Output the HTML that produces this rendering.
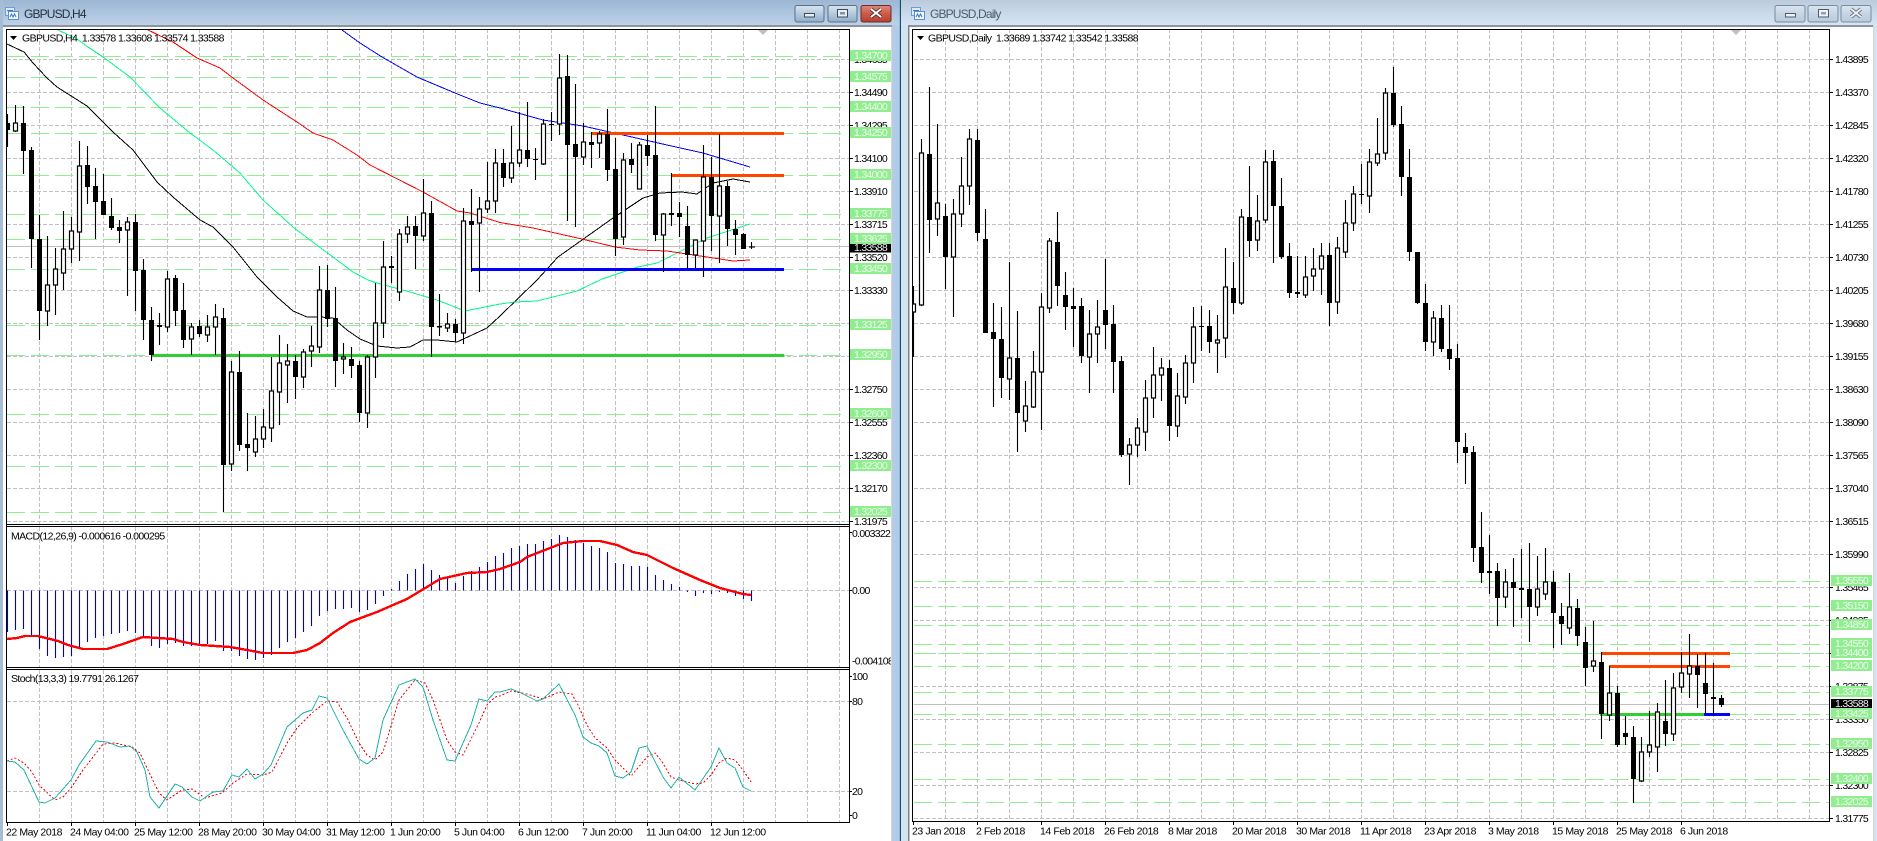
<!DOCTYPE html>
<html><head><meta charset="utf-8"><title>GBPUSD charts</title>
<style>
html,body{margin:0;padding:0;background:#fff;overflow:hidden}
svg{display:block}
text{font-family:"Liberation Sans",sans-serif;font-size:10.5px;letter-spacing:-.7px;fill:#000;white-space:pre}
.l text{fill:#eefdee}
text.t{font-size:12px;letter-spacing:-.85px;fill:#25303c}
text.x{letter-spacing:-.42px}
text.g{letter-spacing:-.6px}
path{fill:none}
.c{shape-rendering:crispEdges}
</style></head><body>
<svg xmlns="http://www.w3.org/2000/svg" width="1877" height="841" viewBox="0 0 1877 841">
<defs>
<linearGradient id="a" x1="0" y1="0" x2="0" y2="1"><stop offset="0" stop-color="#9cb6d3"/><stop offset="1" stop-color="#bdd2e8"/></linearGradient>
<linearGradient id="b" x1="0" y1="0" x2="0" y2="1"><stop offset="0" stop-color="#bccbdb"/><stop offset="1" stop-color="#d6e5f4"/></linearGradient>
<linearGradient id="c" x1="0" y1="0" x2="0" y2="1"><stop offset="0" stop-color="#d9e5f1"/><stop offset=".5" stop-color="#b4c9de"/><stop offset="1" stop-color="#8fafcd"/></linearGradient>
<linearGradient id="d" x1="0" y1="0" x2="0" y2="1"><stop offset="0" stop-color="#e08a7c"/><stop offset=".5" stop-color="#cc5a48"/><stop offset="1" stop-color="#b8402f"/></linearGradient>
<linearGradient id="e" x1="0" y1="0" x2="0" y2="1"><stop offset="0" stop-color="#dbe5ef"/><stop offset=".5" stop-color="#c6d5e4"/><stop offset="1" stop-color="#b9cbdd"/></linearGradient>
</defs>
<rect width="1877" height="841" fill="#fff"/>

<!-- LEFT CHART grid -->
<path stroke="#c0c0c0" stroke-dasharray="4 2" d="M39.5 29V524M71.5 29V524M103.5 29V524M135.5 29V524M167.5 29V524M199.5 29V524M231.5 29V524M263.5 29V524M295.5 29V524M327.5 29V524M359.5 29V524M391.5 29V524M423.5 29V524M455.5 29V524M487.5 29V524M519.5 29V524M551.5 29V524M583.5 29V524M615.5 29V524M647.5 29V524M679.5 29V524M711.5 29V524M743.5 29V524M775.5 29V524M807.5 29V524M839.5 29V524
M39.5 527V667M71.5 527V667M103.5 527V667M135.5 527V667M167.5 527V667M199.5 527V667M231.5 527V667M263.5 527V667M295.5 527V667M327.5 527V667M359.5 527V667M391.5 527V667M423.5 527V667M455.5 527V667M487.5 527V667M519.5 527V667M551.5 527V667M583.5 527V667M615.5 527V667M647.5 527V667M679.5 527V667M711.5 527V667M743.5 527V667M775.5 527V667M807.5 527V667M839.5 527V667
M39.5 670V822M71.5 670V822M103.5 670V822M135.5 670V822M167.5 670V822M199.5 670V822M231.5 670V822M263.5 670V822M295.5 670V822M327.5 670V822M359.5 670V822M391.5 670V822M423.5 670V822M455.5 670V822M487.5 670V822M519.5 670V822M551.5 670V822M583.5 670V822M615.5 670V822M647.5 670V822M679.5 670V822M711.5 670V822M743.5 670V822M775.5 670V822M807.5 670V822M839.5 670V822
M7 59.5H849M7 92.5H849M7 125.5H849M7 158.5H849M7 191.5H849M7 224.5H849M7 257.5H849M7 290.5H849M7 323.5H849M7 356.5H849M7 389.5H849M7 422.5H849M7 455.5H849M7 488.5H849M7 521.5H849
M7 590.5H849M7 701.5H849M7 791.5H849"/>
<path stroke="#c0c0c0" d="M7 246.5H849"/>
<path stroke="#90ee90" stroke-dasharray="18 6" d="M7 56.5H841M7 77.5H841M7 107.5H841M7 133.5H841M7 175.5H841M7 214.5H841M7 239.5H841M7 269.5H841M7 325.5H841M7 355.5H841M7 414.5H841M7 466.5H841M7 512.5H841"/>

<!-- MAs -->
<path class="c" stroke="#000" d="M7 44L24 52L33 63L47 78L57 87L87 106L113 132L133 150L157 182L173 197L200 220L213 227L227 241L233 247L257 277L260 280L277 297L293 311L307 317L320 317L333 318L347 330L360 339L377 346L397 348L410 347L423 340L437 340L457 342L487 328L500 316L537 280L558 257L582 240L613 218L643 198L660 193L682 192L697 194L713 183L733 179L750 182"/>
<path class="c" stroke="#00fa8a" d="M58 30L77 39L88 47L103 57L130 77L160 108L190 133L213 150L240 173L263 200L293 227L310 240L333 257L353 272L368 280L377 283L410 292L437 300L465 311L500 304L515 302L537 301L577 291L600 280L602 279L638 267L657 263L687 248L707 238L750 224"/>
<path class="c" stroke="#f00" d="M148 30L173 42L197 58L220 68L233 78L263 100L297 122L313 133L333 140L357 155L370 165L423 192L457 211L470 213L500 222.5L533 228L582 239L615 247L640 250L667 251L707 257L733 261L750 260"/>
<path class="c" stroke="#00f" d="M342 30L360 43L382 57L417 77L455 93L480 103L500 108L543 120L583 126L623 135L667 145L703 153L750 167"/>

<!-- thick lines -->
<path stroke="#ff4500" stroke-width="3" d="M591 133.5H784M671 175.5H784"/>
<path stroke="#00f" stroke-width="3" d="M471 269.5H784"/>
<path stroke="#32cd32" stroke-width="3" d="M152 355.5H784"/>

<!-- left candles wicks -->
<path stroke="#000" stroke-width="1.1" d="M7.5 114V147M15.5 105V132M23.5 106V174M31.5 147V268M39.5 215V340M47.5 236V326M55.5 248V315M63.5 211V290M71.5 217V263M79.5 141V261M87.5 146V204M95.5 168V239M103.5 174V215M111.5 198V230M119.5 220V243M127.5 217V296M135.5 214V311M143.5 259V340M151.5 307V361M159.5 313V345M167.5 271V332M175.5 275V326M183.5 283V348M191.5 323V355M199.5 320V337M207.5 315V342M215.5 304V355M223.5 308V512M231.5 361V471M239.5 351V451M247.5 413V471M255.5 416V457M263.5 409V448M271.5 357V442M279.5 335V425M287.5 344V403M295.5 355V399M303.5 349V388M311.5 326V367M319.5 266V353M327.5 265V327M335.5 287V387M343.5 343V374M351.5 347V378M359.5 361V422M367.5 355V428M375.5 283V378M383.5 241V338M391.5 256V283M399.5 229V301M407.5 216V243M415.5 216V269M423.5 179V241M431.5 201V357M439.5 294V336M447.5 313V332M455.5 319V342M463.5 208V344M471.5 189V272M479.5 197V292M487.5 162V213M495.5 149V213M503.5 149V187M511.5 126V183M519.5 112V167M527.5 102V167M535.5 148V180M543.5 119V165M551.5 112V141M559.5 54V135M567.5 55V221M575.5 84V227M583.5 123V165M591.5 132V168M599.5 131V158M607.5 109V181M615.5 138V256M623.5 153V245M631.5 143V173M639.5 142V189M647.5 135V166M655.5 106V241M663.5 213V272M671.5 173V226M679.5 202V237M687.5 206V269M695.5 240V268M703.5 145V277M711.5 157V251M719.5 134V263M727.5 181V246M735.5 220V255M743.5 233V249M751.5 242V249"/>
<path stroke="#000" stroke-width="1.1" d="M749 247H755"/>
<!-- black bodies -->
<path stroke="#000" stroke-width="5" d="M7.5 123V130M23.5 123V151M31.5 150V239M39.5 239V311M87.5 165V187M95.5 186V202M103.5 201V215M111.5 216V228M119.5 227V231M135.5 222V271M143.5 270V320M151.5 320V355M159.5 325V327M175.5 278V311M183.5 310V340M199.5 326V334M223.5 318V465M239.5 372V445M247.5 444V448M295.5 361V377M327.5 290V319M335.5 318V361M351.5 359V366M359.5 365V413M391.5 266V268M415.5 226V236M431.5 213V327M439.5 326V327.5M455.5 324V333M471.5 221V225M503.5 163V178M527.5 150V159M535.5 159V160M551.5 124V125M567.5 76V145M575.5 144V157M591.5 142V145M607.5 134V170M615.5 169V239M631.5 159V165M647.5 145V156M655.5 155V235M671.5 213V215M679.5 213V217M687.5 226V255M711.5 177V216M727.5 186V229M735.5 229V235M743.5 234V249"/>
<!-- white bodies -->
<path stroke="#000" stroke-width="1.2" style="fill:#fff" d="M13.5 123h4V131h-4zM45.5 285h4V311h-4zM53.5 269h4V285h-4zM61.5 249h4V273h-4zM69.5 231h4V249h-4zM77.5 166h4V232h-4zM125.5 222h4V230h-4zM165.5 279h4V327h-4zM189.5 327h4V339h-4zM205.5 327h4V335h-4zM213.5 317h4V327h-4zM229.5 372h4V464h-4zM253.5 439h4V452h-4zM261.5 427h4V439h-4zM269.5 391h4V428h-4zM277.5 363h4V392h-4zM285.5 361h4V365h-4zM301.5 352h4V377h-4zM309.5 346h4V351h-4zM317.5 290h4V347h-4zM341.5 357h4V359h-4zM365.5 357h4V413h-4zM373.5 323h4V357h-4zM381.5 267h4V323h-4zM397.5 234h4V292h-4zM405.5 227h4V234h-4zM421.5 213h4V236h-4zM445.5 324h4V328h-4zM461.5 221h4V333h-4zM477.5 209h4V223h-4zM485.5 201h4V209h-4zM493.5 163h4V201h-4zM509.5 163h4V178h-4zM517.5 150h4V163h-4zM541.5 124h4V164h-4zM557.5 78h4V124h-4zM581.5 142h4V157h-4zM597.5 134h4V143h-4zM621.5 160h4V237h-4zM637.5 145h4V189h-4zM661.5 214h4V235h-4zM693.5 240h4V255h-4zM701.5 177h4V241h-4zM717.5 186h4V216h-4z"/>

<!-- MACD histogram -->
<path stroke="#0000cd" stroke-width="1.1" d="M7.5 590.5V632M15.5 590.5V630M23.5 590.5V629M31.5 590.5V637M39.5 590.5V649M47.5 590.5V656M55.5 590.5V658M63.5 590.5V657M71.5 590.5V656M79.5 590.5V648M87.5 590.5V642M95.5 590.5V638M103.5 590.5V636M111.5 590.5V634M119.5 590.5V633M127.5 590.5V631M135.5 590.5V633M143.5 590.5V637M151.5 590.5V646M159.5 590.5V648M167.5 590.5V644M175.5 590.5V643M183.5 590.5V646M191.5 590.5V646M199.5 590.5V644M207.5 590.5V644M215.5 590.5V641M223.5 590.5V651M231.5 590.5V651M239.5 590.5V656M247.5 590.5V659M255.5 590.5V660M263.5 590.5V658M271.5 590.5V655M279.5 590.5V648M287.5 590.5V642M295.5 590.5V638M303.5 590.5V632M311.5 590.5V626M319.5 590.5V616M327.5 590.5V611M335.5 590.5V609M343.5 590.5V609M351.5 590.5V608M359.5 590.5V612M367.5 590.5V610M375.5 590.5V604M383.5 590.5V596M391.5 590.5V589M399.5 590.5V581M407.5 590.5V574M415.5 590.5V569M423.5 590.5V564M431.5 590.5V570M439.5 590.5V575M447.5 590.5V578M455.5 590.5V583M463.5 590.5V576M471.5 590.5V571M479.5 590.5V567M487.5 590.5V562M495.5 590.5V556M503.5 590.5V553M511.5 590.5V548M519.5 590.5V546M527.5 590.5V544M535.5 590.5V544M543.5 590.5V541M551.5 590.5V539M559.5 590.5V535M567.5 590.5V537M575.5 590.5V540M583.5 590.5V543M591.5 590.5V546M599.5 590.5V548M607.5 590.5V552M615.5 590.5V563M623.5 590.5V564M631.5 590.5V566M639.5 590.5V566M647.5 590.5V567M655.5 590.5V575M663.5 590.5V580M671.5 590.5V584M679.5 590.5V587M687.5 590.5V592M695.5 590.5V596M703.5 590.5V593M711.5 590.5V594M719.5 590.5V592M727.5 590.5V593M735.5 590.5V596M743.5 590.5V599M751.5 590.5V601"/>
<path class="c" stroke="#f00" stroke-width="2.4" d="M7 639L17 638L25 636L38 636L50 639L58 641L68 645L83 649L107 649L123 644L143 637L173 639L183 642L200 645L230 647L247 650L263 653L293 653L307 650L320 643L333 633L350 622L377 612L393 605L407 599L427 587L440 579L467 573L487 572L500 569L520 562L527 557L550 548L563 543L583 541L600 541L617 545L633 552L647 555L673 568L700 580L720 588L743 594L751 595"/>

<!-- Stoch -->
<path class="c" stroke="#f00" stroke-dasharray="2 2" d="M7 761L15 758L24 763L32 772L39 785L55 800L63 797L71 788L83 770L103 744L115 743L132 747L140 753L148 770L159 793L167 800L182 790L192 789L205 798L222 793L233 783L247 774L263 775L272 772L287 743L297 728L312 713L327 701L337 702L347 718L359 743L367 755L375 760L383 752L399 700L415 680L425 683L433 700L447 740L455 752L463 755L479 723L487 705L495 697L500 696L511 691L527 694L543 699L559 692L572 694L578 705L587 725L595 738L607 748L615 760L631 776L647 757L655 753L663 763L671 777L679 780L695 784L703 783L711 775L719 763L727 758L735 760L743 770L751 782"/>
<path class="c" stroke="#20b2aa" d="M7 761L15 762L24 770L39 802L45 803L55 798L71 780L79 765L96 741L107 742L120 747L130 746L137 752L145 770L150 797L159 808L175 784L182 787L192 797L200 801L213 792L223 791L232 775L239 777L247 769L255 779L263 774L271 765L287 727L303 713L312 710L319 696L327 698L343 730L359 759L367 764L375 758L383 720L399 685L415 679L423 687L433 720L447 760L455 761L471 725L479 699L487 701L495 692L500 692L511 689L519 692L537 701L543 699L559 684L575 715L583 737L591 743L599 746L607 753L615 776L623 778L631 772L639 748L647 746L663 777L671 788L679 777L695 790L711 767L719 748L727 763L735 768L743 787L751 791"/>

<path fill="#c0c0c0" style="fill:#c0c0c0" d="M758 30H768L763 35Z"/>

<!-- left chart frame -->
<rect x="0" y="27" width="6" height="814" fill="#fff"/>
<path stroke="#000" d="M6.5 29V822.5M6 29.5H849M849.5 29V823M6 524.5H849M6 526.5H849M6 667.5H849M6 669.5H849M6 822.5H850"/>
<path stroke="#000" d="M849 59.5h4M849 92.5h4M849 125.5h4M849 158.5h4M849 191.5h4M849 224.5h4M849 257.5h4M849 290.5h4M849 323.5h4M849 356.5h4M849 389.5h4M849 422.5h4M849 455.5h4M849 488.5h4M849 521.5h4M849 590.5h3M849 532.5h3M849 676.5h3M849 701.5h3M849 791.5h3M849 815.5h3M7.5 822v4M71.5 822v4M135.5 822v4M199.5 822v4M263.5 822v4M327.5 822v4M391.5 822v4M455.5 822v4M519.5 822v4M583.5 822v4M647.5 822v4M711.5 822v4"/>

<!-- left price text -->
<g>
<text x="854" y="63">1.34685</text><text x="854" y="96">1.34490</text><text x="854" y="129">1.34295</text><text x="854" y="162">1.34100</text><text x="854" y="195">1.33910</text><text x="854" y="228">1.33715</text><text x="854" y="261">1.33520</text><text x="854" y="294">1.33330</text><text x="854" y="393">1.32750</text><text x="854" y="426">1.32555</text><text x="854" y="459">1.32360</text><text x="854" y="492">1.32170</text><text x="854" y="525">1.31975</text>
<text x="852" y="537">0.003322</text><text x="852" y="594">0.00</text><text x="852" y="664.5">-0.004108</text>
<text x="852" y="680">100</text><text x="852" y="705">80</text><text x="852" y="795">20</text><text x="852" y="819">0</text>
</g>
<g fill="#90ee90">
<rect x="850" y="50" width="41" height="11"/><rect x="850" y="71" width="41" height="11"/><rect x="850" y="101" width="41" height="11"/><rect x="850" y="127" width="41" height="11"/><rect x="850" y="169" width="41" height="11"/><rect x="850" y="208" width="41" height="11"/><rect x="850" y="233" width="41" height="11"/><rect x="850" y="263" width="41" height="11"/><rect x="850" y="319" width="41" height="11"/><rect x="850" y="349" width="41" height="11"/><rect x="850" y="408" width="41" height="11"/><rect x="850" y="460" width="41" height="11"/><rect x="850" y="506" width="41" height="11"/>
</g>
<g class="l">
<text x="854" y="59">1.34700</text><text x="854" y="80">1.34575</text><text x="854" y="110">1.34400</text><text x="854" y="136">1.34250</text><text x="854" y="178">1.34000</text><text x="854" y="217">1.33775</text><text x="854" y="242">1.33625</text><text x="854" y="272">1.33450</text><text x="854" y="328">1.33125</text><text x="854" y="358">1.32950</text><text x="854" y="417">1.32600</text><text x="854" y="469">1.32300</text><text x="854" y="515">1.32025</text>
</g>
<rect x="850" y="244" width="41" height="8.5" fill="#000"/>
<text x="854" y="251" style="fill:#eee">1.33588</text>

<!-- left legends -->
<path style="fill:#000" d="M10 36H17L13.5 40Z"/>
<text class="g" x="22" y="41.5">GBPUSD,H4  1.33578 1.33608 1.33574 1.33588</text>
<text class="g" x="11" y="539.5">MACD(12,26,9) -0.000616 -0.000295</text>
<text class="g" x="11" y="682">Stoch(13,3,3) 19.7791 26.1267</text>
<text class="x" x="6" y="835.5">22 May 2018</text><text class="x" x="70" y="835.5">24 May 04:00</text><text class="x" x="134" y="835.5">25 May 12:00</text><text class="x" x="198" y="835.5">28 May 20:00</text><text class="x" x="262" y="835.5">30 May 04:00</text><text class="x" x="326" y="835.5">31 May 12:00</text><text class="x" x="390" y="835.5">1 Jun 20:00</text><text class="x" x="454" y="835.5">5 Jun 04:00</text><text class="x" x="518" y="835.5">6 Jun 12:00</text><text class="x" x="582" y="835.5">7 Jun 20:00</text><text class="x" x="646" y="835.5">11 Jun 04:00</text><text class="x" x="710" y="835.5">12 Jun 12:00</text>

<!-- RIGHT CHART grid -->
<rect x="909" y="27" width="964" height="814" fill="#fff"/>
<path stroke="#c0c0c0" stroke-dasharray="4 2" d="M945.5 29V821M977.5 29V821M1009.5 29V821M1041.5 29V821M1073.5 29V821M1105.5 29V821M1137.5 29V821M1169.5 29V821M1201.5 29V821M1233.5 29V821M1265.5 29V821M1297.5 29V821M1329.5 29V821M1361.5 29V821M1393.5 29V821M1425.5 29V821M1457.5 29V821M1489.5 29V821M1521.5 29V821M1553.5 29V821M1585.5 29V821M1617.5 29V821M1649.5 29V821M1681.5 29V821M1713.5 29V821M1745.5 29V821M1777.5 29V821M1809.5 29V821
M914 59.5H1829M914 92.5H1829M914 125.5H1829M914 158.5H1829M914 191.5H1829M914 224.5H1829M914 257.5H1829M914 290.5H1829M914 323.5H1829M914 356.5H1829M914 389.5H1829M914 422.5H1829M914 455.5H1829M914 488.5H1829M914 521.5H1829M914 554.5H1829M914 587.5H1829M914 620.5H1829M914 653.5H1829M914 686.5H1829M914 719.5H1829M914 752.5H1829M914 785.5H1829M914 818.5H1829"/>
<path stroke="#c0c0c0" d="M914 704.5H1829"/>
<path stroke="#90ee90" stroke-dasharray="18 6" d="M914 581.5H1829M914 606.5H1829M914 625.5H1829M914 644.5H1829M914 653.5H1829M914 666.5H1829M914 692.5H1829M914 714.5H1829M914 744.5H1829M914 779.5H1829M914 802.5H1829"/>
<path stroke="#ff4500" stroke-width="3" d="M1601 653.5H1730M1609 666.5H1730"/>
<path stroke="#32cd32" stroke-width="3" d="M1600 714.5H1705"/>
<path stroke="#00f" stroke-width="3" d="M1704 714.5H1730"/>

<!-- right wicks -->
<path stroke="#000" stroke-width="1.1" d="M913.5 286V357M921.5 139V306M929.5 87V253M937.5 124V236M945.5 204V289M953.5 199V317M961.5 157V227M969.5 129V205M977.5 129V241M985.5 209V333M993.5 303V407M1001.5 307V398M1009.5 262V400M1017.5 311V452M1025.5 381V432M1033.5 351V408M1041.5 293V430M1049.5 238V313M1057.5 212V306M1065.5 272V330M1073.5 288V347M1081.5 298V363M1089.5 310V393M1097.5 300V363M1105.5 259V349M1113.5 305V393M1121.5 356V457M1129.5 438V485M1137.5 418V457M1145.5 380V451M1153.5 347V418M1161.5 358V401M1169.5 360V441M1177.5 373V437M1185.5 355V404M1193.5 307V383M1201.5 306V351M1209.5 310V353M1217.5 315V373M1225.5 248V358M1233.5 262V314M1241.5 209V305M1249.5 166V257M1257.5 195V251M1265.5 150V223M1273.5 150V263M1281.5 178V259M1289.5 243V298M1297.5 256V298M1305.5 256V298M1313.5 248V291M1321.5 243V295M1329.5 243V326M1337.5 237V314M1345.5 200V258M1353.5 186V231M1361.5 164V204M1369.5 149V213M1377.5 118V166M1385.5 88V160M1393.5 67V127M1401.5 106V196M1409.5 149V261M1417.5 252V304M1425.5 284V351M1433.5 311V356M1441.5 305V352M1449.5 305V370M1457.5 344V463M1465.5 433V484M1473.5 446V562M1481.5 512V583M1489.5 535V594M1497.5 563V626M1505.5 569V608M1513.5 558V627M1521.5 549V618M1529.5 543V642M1537.5 556V616M1545.5 548V600M1553.5 571V648M1561.5 603V645M1569.5 573V634M1577.5 599V646M1585.5 627V686M1593.5 621V672M1601.5 652V739M1609.5 666V721M1617.5 686V747M1625.5 716V745M1633.5 726V803M1641.5 737V782M1649.5 711V757M1657.5 703V772M1665.5 680V746M1673.5 673V741M1681.5 652V693M1689.5 634V698M1697.5 654V708M1705.5 653V714M1713.5 663V715M1721.5 695V707"/>
<!-- right black bodies -->
<path stroke="#000" stroke-width="5" d="M929.5 154V220M945.5 216V257M977.5 140V233M985.5 239V333M993.5 332V339M1001.5 339V378M1017.5 358V413M1057.5 242V286M1065.5 295V307M1073.5 306V309M1081.5 306V356M1105.5 310V325M1113.5 324V362M1121.5 361V455M1169.5 368V426M1201.5 326V327M1209.5 326V342M1233.5 288V303M1249.5 217V241M1273.5 161V206M1281.5 206V257M1289.5 256V293M1297.5 292V294M1329.5 255V303M1361.5 194V195M1393.5 93V125M1401.5 124V177M1409.5 177V252M1417.5 252V303M1425.5 303V342M1441.5 318V349M1449.5 349V359M1457.5 358V442M1465.5 447V453M1473.5 452V548M1481.5 547V573M1489.5 571V573M1497.5 571V598M1513.5 582V588M1521.5 588V590M1529.5 589V607M1553.5 582V613M1561.5 616V624M1577.5 608V636M1585.5 642V668M1601.5 662V714M1617.5 693V745M1625.5 733V737M1633.5 737V779M1665.5 721V734M1697.5 666V675M1705.5 683V694M1713.5 697V699M1721.5 698V705"/>
<!-- right white bodies -->
<path stroke="#000" stroke-width="1.2" style="fill:#fff" d="M911.5 304h4V312h-4zM919.5 153h4V305h-4zM935.5 203h4V219h-4zM951.5 214h4V257h-4zM959.5 186h4V214h-4zM967.5 139h4V186h-4zM1007.5 358h4V379h-4zM1023.5 406h4V421h-4zM1031.5 372h4V407h-4zM1039.5 307h4V372h-4zM1047.5 241h4V308h-4zM1087.5 334h4V357h-4zM1095.5 327h4V334h-4zM1127.5 445h4V454h-4zM1135.5 428h4V445h-4zM1143.5 398h4V432h-4zM1151.5 375h4V398h-4zM1159.5 368h4V375h-4zM1175.5 396h4V426h-4zM1183.5 363h4V397h-4zM1191.5 327h4V363h-4zM1215.5 340h4V343h-4zM1223.5 287h4V338h-4zM1239.5 217h4V303h-4zM1255.5 221h4V240h-4zM1263.5 162h4V220h-4zM1303.5 277h4V295h-4zM1311.5 269h4V276h-4zM1319.5 256h4V269h-4zM1335.5 248h4V302h-4zM1343.5 223h4V252h-4zM1351.5 194h4V223h-4zM1367.5 162h4V196h-4zM1375.5 154h4V163h-4zM1383.5 93h4V153h-4zM1431.5 318h4V342h-4zM1503.5 582h4V597h-4zM1535.5 589h4V607h-4zM1543.5 582h4V594h-4zM1567.5 607h4V628h-4zM1591.5 661h4V666h-4zM1607.5 693h4V715h-4zM1639.5 752h4V781h-4zM1647.5 745h4V752h-4zM1655.5 712h4V747h-4zM1671.5 688h4V734h-4zM1679.5 673h4V687h-4zM1687.5 666h4V674h-4z"/>
<path style="fill:#c0c0c0" d="M1731 30H1741L1736 35Z"/>

<!-- right frame -->
<rect x="909" y="27" width="3.5" height="814" fill="#fff"/>
<path stroke="#000" d="M912.5 29V822M912 29.5H1829M1829.5 29V822M912 821.5H1830"/>
<path stroke="#000" d="M1829 59.5h4M1829 92.5h4M1829 125.5h4M1829 158.5h4M1829 191.5h4M1829 224.5h4M1829 257.5h4M1829 290.5h4M1829 323.5h4M1829 356.5h4M1829 389.5h4M1829 422.5h4M1829 455.5h4M1829 488.5h4M1829 521.5h4M1829 554.5h4M1829 587.5h4M1829 620.5h4M1829 653.5h4M1829 686.5h4M1829 719.5h4M1829 752.5h4M1829 785.5h4M1829 818.5h4M913.5 821v4M977.5 821v4M1041.5 821v4M1105.5 821v4M1169.5 821v4M1233.5 821v4M1297.5 821v4M1361.5 821v4M1425.5 821v4M1489.5 821v4M1553.5 821v4M1617.5 821v4M1681.5 821v4"/>
<g>
<text x="1835" y="63">1.43895</text><text x="1835" y="96">1.43370</text><text x="1835" y="129">1.42845</text><text x="1835" y="162">1.42320</text><text x="1835" y="195">1.41780</text><text x="1835" y="228">1.41255</text><text x="1835" y="261">1.40730</text><text x="1835" y="294">1.40205</text><text x="1835" y="327">1.39680</text><text x="1835" y="360">1.39155</text><text x="1835" y="393">1.38630</text><text x="1835" y="426">1.38090</text><text x="1835" y="459">1.37565</text><text x="1835" y="492">1.37040</text><text x="1835" y="525">1.36515</text><text x="1835" y="558">1.35990</text><text x="1835" y="591">1.35465</text><text x="1835" y="624">1.34935</text><text x="1835" y="690">1.33875</text><text x="1835" y="723">1.33350</text><text x="1835" y="756">1.32825</text><text x="1835" y="789">1.32300</text><text x="1835" y="822">1.31775</text>
</g>
<g fill="#90ee90">
<rect x="1831" y="575" width="41" height="11"/><rect x="1831" y="600" width="41" height="11"/><rect x="1831" y="619" width="41" height="11"/><rect x="1831" y="638" width="41" height="11"/><rect x="1831" y="647" width="41" height="11"/><rect x="1831" y="660" width="41" height="11"/><rect x="1831" y="686" width="41" height="11"/><rect x="1831" y="708" width="41" height="11"/><rect x="1831" y="738" width="41" height="11"/><rect x="1831" y="773" width="41" height="11"/><rect x="1831" y="796" width="41" height="11"/>
</g>
<g class="l">
<text x="1835" y="584">1.35550</text><text x="1835" y="609">1.35150</text><text x="1835" y="628">1.34850</text><text x="1835" y="647">1.34550</text><text x="1835" y="656">1.34400</text><text x="1835" y="669">1.34200</text><text x="1835" y="695">1.33775</text><text x="1835" y="717">1.33425</text><text x="1835" y="747">1.32950</text><text x="1835" y="782">1.32400</text><text x="1835" y="805">1.32025</text>
</g>
<rect x="1831" y="699" width="41" height="9" fill="#000"/>
<text x="1835" y="707" style="fill:#eee">1.33588</text>

<path style="fill:#000" d="M917 36H924L920.5 40Z"/>
<text class="g" x="928" y="41.5">GBPUSD,Daily  1.33689 1.33742 1.33542 1.33588</text>
<text class="x" x="912" y="834.5">23 Jan 2018</text><text class="x" x="976" y="834.5">2 Feb 2018</text><text class="x" x="1040" y="834.5">14 Feb 2018</text><text class="x" x="1104" y="834.5">26 Feb 2018</text><text class="x" x="1168" y="834.5">8 Mar 2018</text><text class="x" x="1232" y="834.5">20 Mar 2018</text><text class="x" x="1296" y="834.5">30 Mar 2018</text><text class="x" x="1360" y="834.5">11 Apr 2018</text><text class="x" x="1424" y="834.5">23 Apr 2018</text><text class="x" x="1488" y="834.5">3 May 2018</text><text class="x" x="1552" y="834.5">15 May 2018</text><text class="x" x="1616" y="834.5">25 May 2018</text><text class="x" x="1680" y="834.5">6 Jun 2018</text>

<!-- window chrome -->
<rect x="0" y="0" width="900" height="25" fill="url(#a)"/>
<rect x="0" y="25" width="900" height="2" fill="#8d949c"/>
<rect x="0" y="0" width="3" height="841" fill="#a6bdd6"/>
<rect x="891" y="27" width="1" height="814" fill="#d8d8d8"/>
<rect x="892" y="25" width="8" height="816" fill="#b3cbe6"/>
<rect x="900" y="0" width="1" height="841" fill="#123"/>
<rect x="899.5" y="0" width="1" height="841" fill="#2aa6c8" opacity=".7"/>
<rect x="901" y="0" width="976" height="25" fill="url(#b)"/>
<rect x="904" y="25" width="973" height="2" fill="#8d949c"/>
<rect x="901" y="25" width="7" height="816" fill="#d4e3f2"/>
<rect x="908" y="25" width="1.5" height="816" fill="#808487"/>
<rect x="1873" y="25" width="1" height="816" fill="#d8d8d8"/>
<rect x="1874" y="25" width="3" height="816" fill="#d4e3f2"/>

<!-- title icons -->
<g>
<rect x="5.5" y="7.5" width="9" height="8" fill="#dbe9f7" stroke="#6f9bd0"/>
<rect x="8.5" y="11.5" width="10" height="8" fill="#f4f9fe" stroke="#5f8fca"/>
<path stroke="#3a78c0" d="M7 10.5h6M10 17l1.5-3 1.500 3 1.500-3 1.500 3"/>
<rect x="911.500" y="7.500" width="9" height="8" fill="#dbe9f7" stroke="#6f9bd0"/>
<rect x="914.500" y="11.500" width="10" height="8" fill="#f4f9fe" stroke="#5f8fca"/>
<path stroke="#3a78c0" d="M913 10.500h6M916 17l1.500-3 1.500 3 1.500-3 1.500 3"/>
</g>
<text class="t" x="24" y="18">GBPUSD,H4</text>
<text class="t" x="930" y="18" style="fill:#4d5a67">GBPUSD,Daily</text>

<!-- buttons left -->
<rect x="795" y="5.500" width="29" height="16.500" rx="2" fill="url(#c)" stroke="#5d6f85"/>
<rect x="828" y="5.500" width="29" height="16.500" rx="2" fill="url(#c)" stroke="#5d6f85"/>
<rect x="861" y="5.500" width="30" height="16.500" rx="2" fill="url(#d)" stroke="#6d2a28"/>
<rect x="804.500" y="13.500" width="10" height="3.500" fill="#e9eef3" stroke="#3e4a58"/>
<rect x="837.500" y="9.500" width="10" height="7.500" fill="#e9eef3" stroke="#3e4a58"/>
<rect x="840" y="12" width="5" height="2.500" fill="#7f93a8"/>
<path stroke="#3c2220" stroke-width="3.400" d="M871 9L881 17M881 9L871 17"/>
<path stroke="#fff" stroke-width="2" d="M871 9L881 17M881 9L871 17"/>

<!-- buttons right -->
<rect x="1775" y="5.500" width="30" height="16.500" rx="2" fill="url(#e)" stroke="#7b8a9c"/>
<rect x="1808" y="5.500" width="30" height="16.500" rx="2" fill="url(#e)" stroke="#7b8a9c"/>
<rect x="1841" y="5.500" width="30" height="16.500" rx="2" fill="url(#e)" stroke="#7b8a9c"/>
<rect x="1785.500" y="13.500" width="10" height="3.500" fill="#eef2f6" stroke="#4f5c6a"/>
<rect x="1818.500" y="9.500" width="10" height="7.500" fill="#eef2f6" stroke="#4f5c6a"/>
<rect x="1821" y="12" width="5" height="2.500" fill="#8fa1b4"/>
<path stroke="#4f5c6a" stroke-width="3.400" d="M1851 9L1861 17M1861 9L1851 17"/>
<path stroke="#eef2f6" stroke-width="2" d="M1851 9L1861 17M1861 9L1851 17"/>
</svg>
</body></html>
